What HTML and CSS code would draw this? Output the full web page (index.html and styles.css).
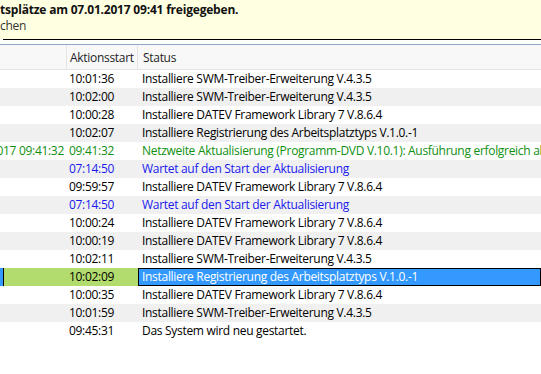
FILE: index.html
```html
<!DOCTYPE html>
<html lang="de">
<head>
  <meta charset="UTF-8">
  <title>Aktualisierung</title>
  <link rel="stylesheet" href="styles.css">
</head>
<body>

  <div class="banner">
    <p class="banner-title">tsplätze am 07.01.2017 09:41 freigegeben.</p>
    <p class="banner-link">chen</p>
  </div>
  <div class="rule"></div>

  <div class="list">
    <div class="row head">
      <span class="cell c-date"></span>
      <span class="cell c-start">Aktionsstart</span>
      <span class="cell c-status">Status</span>
    </div>

    <div class="row">
      <span class="cell c-date"></span>
      <span class="cell c-start">10:01:36</span>
      <span class="cell c-status">Installiere SWM-Treiber-Erweiterung V.4.3.5</span>
    </div>
    <div class="row alt">
      <span class="cell c-date"></span>
      <span class="cell c-start">10:02:00</span>
      <span class="cell c-status">Installiere SWM-Treiber-Erweiterung V.4.3.5</span>
    </div>
    <div class="row">
      <span class="cell c-date"></span>
      <span class="cell c-start">10:00:28</span>
      <span class="cell c-status">Installiere DATEV Framework Library 7 V.8.6.4</span>
    </div>
    <div class="row alt">
      <span class="cell c-date"></span>
      <span class="cell c-start">10:02:07</span>
      <span class="cell c-status">Installiere Registrierung des Arbeitsplatztyps V.1.0.-1</span>
    </div>
    <div class="row ok">
      <span class="cell c-date"><span>07.01.2017 09:41:32</span></span>
      <span class="cell c-start">09:41:32</span>
      <span class="cell c-status">Netzweite Aktualisierung (Programm-DVD V.10.1): Ausführung erfolgreich abgeschlossen</span>
    </div>
    <div class="row alt wait">
      <span class="cell c-date"></span>
      <span class="cell c-start">07:14:50</span>
      <span class="cell c-status">Wartet auf den Start der Aktualisierung</span>
    </div>
    <div class="row">
      <span class="cell c-date"></span>
      <span class="cell c-start">09:59:57</span>
      <span class="cell c-status">Installiere DATEV Framework Library 7 V.8.6.4</span>
    </div>
    <div class="row alt wait">
      <span class="cell c-date"></span>
      <span class="cell c-start">07:14:50</span>
      <span class="cell c-status">Wartet auf den Start der Aktualisierung</span>
    </div>
    <div class="row">
      <span class="cell c-date"></span>
      <span class="cell c-start">10:00:24</span>
      <span class="cell c-status">Installiere DATEV Framework Library 7 V.8.6.4</span>
    </div>
    <div class="row alt">
      <span class="cell c-date"></span>
      <span class="cell c-start">10:00:19</span>
      <span class="cell c-status">Installiere DATEV Framework Library 7 V.8.6.4</span>
    </div>
    <div class="row">
      <span class="cell c-date"></span>
      <span class="cell c-start">10:02:11</span>
      <span class="cell c-status">Installiere SWM-Treiber-Erweiterung V.4.3.5</span>
    </div>
    <div class="row selected">
      <span class="cell c-date"></span>
      <span class="cell c-start">10:02:09</span>
      <span class="cell c-status">Installiere Registrierung des Arbeitsplatztyps V.1.0.-1</span>
    </div>
    <div class="row">
      <span class="cell c-date"></span>
      <span class="cell c-start">10:00:35</span>
      <span class="cell c-status">Installiere DATEV Framework Library 7 V.8.6.4</span>
    </div>
    <div class="row alt">
      <span class="cell c-date"></span>
      <span class="cell c-start">10:01:59</span>
      <span class="cell c-status">Installiere SWM-Treiber-Erweiterung V.4.3.5</span>
    </div>
    <div class="row">
      <span class="cell c-date"></span>
      <span class="cell c-start">09:45:31</span>
      <span class="cell c-status">Das System wird neu gestartet.</span>
    </div>
  </div>

</body>
</html>
```

FILE: styles.css
```css
body {
  margin: 0;
  background: #ffffff;
  font-family: 'Open Sans', 'Noto Sans', sans-serif;
  font-size: 12px;
  letter-spacing: -0.3px;
  color: #000000;
  overflow: hidden;
}

/* Yellow info banner on top */
.banner {
  height: 39px;
  background: #ffffe1;
  overflow: hidden;
}

.banner p {
  margin: 0;
  white-space: nowrap;
  line-height: 16px;
}

.banner-title {
  padding-top: 2px;
  font-weight: bold;
  letter-spacing: -0.2px;
  color: #111111;
}

.banner-link {
  color: #333333;
}

.rule {
  height: 1px;
  margin-left: 3px;
  background: #000000;
}

/* List view */
.list {
  margin-top: 4px;
  border-top: 1px solid #8fa6c6;
}

.row {
  display: grid;
  grid-template-columns: 67px 71px 1fr;
  height: 18px;
  line-height: 18px;
  white-space: nowrap;
}

.cell {
  overflow: hidden;
}

.c-start {
  padding-left: 2px;
}

.c-status {
  padding-left: 4px;
}

.c-date {
  display: flex;
  justify-content: flex-end;
  padding-right: 3px;
}

.head {
  height: 24px;
  line-height: 16px;
  background: #f8f8f8;
  border-bottom: 1px solid #e5e5e5;
  color: #1e1e1e;
}

.head .cell {
  padding-top: 5px;
}

.head .c-date,
.head .c-start {
  border-right: 1px solid #e5e5e5;
}

.head .c-start {
  padding-left: 3px;
}

.head .c-status {
  padding-left: 5px;
}

.alt {
  background: #f0f0f0;
}

.ok {
  color: #0f8f0f;
}

.wait {
  color: #1a1aee;
}

/* Selected row */
.selected {
  background: #b3dc6e;
}

.selected .c-date {
  border-left: 3px solid #3399ff;
  box-shadow: inset 1px 0 #000000;
}

.selected .c-status {
  background: #3399ff;
  color: #ffffff;
  border: 1px solid #000000;
  padding-left: 3px;
  line-height: 16px;
}
```
